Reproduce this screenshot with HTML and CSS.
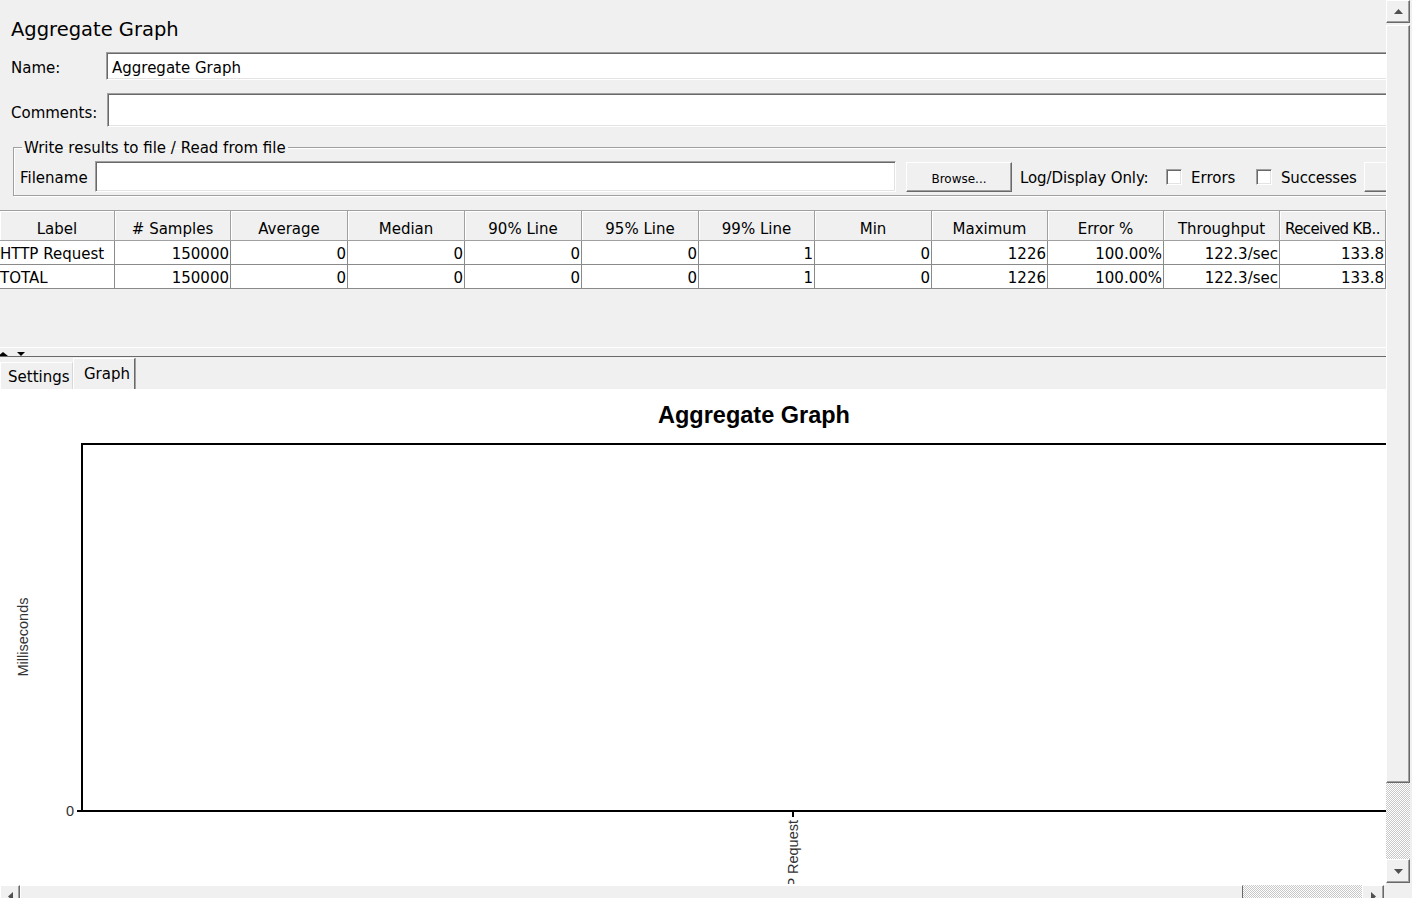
FILE: index.html
```html
<!DOCTYPE html>
<html>
<head>
<meta charset="utf-8">
<link rel="stylesheet" href="styles.css">
</head>
<body>
<div class="frame">
  <div class="main">
    <div class="title">Aggregate Graph</div>
    <div class="row name-row">
      <span class="lbl">Name:</span>
      <div class="field name-field">Aggregate Graph</div>
    </div>
    <div class="row comments-row">
      <span class="lbl">Comments:</span>
      <div class="field comments-field"></div>
    </div>
    <fieldset class="fileset">
      <legend>Write results to file / Read from file</legend>
      <div class="file-row">
        <span class="fname">Filename</span>
        <div class="field file-field"></div>
        <div class="btn browse">Browse...</div>
        <span class="logonly">Log/Display Only:</span>
        <span class="chk"></span><span class="chk-lbl errors">Errors</span>
        <span class="chk"></span><span class="chk-lbl succ">Successes</span>
        <div class="btn configure"></div>
      </div>
    </fieldset>
    <table class="grid">
      <colgroup>
        <col style="width:115px"><col style="width:116px"><col style="width:117px"><col style="width:117px">
        <col style="width:117px"><col style="width:117px"><col style="width:116px"><col style="width:117px">
        <col style="width:116px"><col style="width:116px"><col style="width:116px"><col style="width:106px">
      </colgroup>
      <thead>
        <tr>
          <th>Label</th><th># Samples</th><th>Average</th><th>Median</th><th>90% Line</th><th>95% Line</th>
          <th>99% Line</th><th>Min</th><th>Maximum</th><th>Error %</th><th>Throughput</th><th class="trunc">Received KB..</th>
        </tr>
      </thead>
      <tbody>
        <tr>
          <td class="l">HTTP Request</td><td>150000</td><td>0</td><td>0</td><td>0</td><td>0</td>
          <td>1</td><td>0</td><td>1226</td><td>100.00%</td><td>122.3/sec</td><td>133.8</td>
        </tr>
        <tr>
          <td class="l">TOTAL</td><td>150000</td><td>0</td><td>0</td><td>0</td><td>0</td>
          <td>1</td><td>0</td><td>1226</td><td>100.00%</td><td>122.3/sec</td><td>133.8</td>
        </tr>
      </tbody>
    </table>
    <div class="table-gap"></div>
    <div class="divider">
      <svg class="div-arrows" width="30" height="5" viewBox="0 0 30 5">
        <polygon points="-2,4 3,0 8,4" fill="#000"/>
        <polygon points="17,0 25,0 21,4" fill="#000"/>
      </svg>
    </div>
    <div class="tabs">
      <div class="tab">Settings</div>
      <div class="tab sel">Graph</div>
    </div>
    <div class="graph">
      <svg class="chart" width="1508" height="494" viewBox="0 0 1508 494">
        <text x="754" y="33" text-anchor="middle" class="ctitle">Aggregate Graph</text>
        <rect x="82" y="54" width="1424" height="367" fill="#fff" stroke="#000" stroke-width="2"/>
        <line x1="77" y1="421" x2="82" y2="421" stroke="#000" stroke-width="2"/>
        <text x="74" y="426" text-anchor="end" class="ctick">0</text>
        <line x1="793" y1="421" x2="793" y2="427" stroke="#000" stroke-width="2"/>
        <text transform="translate(798,430) rotate(-90)" text-anchor="end" class="ctick">HTTP Request</text>
        <text transform="translate(28,247) rotate(-90)" text-anchor="middle" class="ctick">Milliseconds</text>
      </svg>
    </div>
  </div>
  <div class="vscroll">
    <div class="sbtn up">
      <svg width="9" height="5" viewBox="0 0 9 5"><polygon points="0,5 4.5,0 9,5" fill="#505050"/></svg>
    </div>
    <div class="vthumb"></div>
    <div class="vtrack"></div>
    <div class="sbtn down">
      <svg width="9" height="5" viewBox="0 0 9 5"><polygon points="0,0 9,0 4.5,5" fill="#505050"/></svg>
    </div>
  </div>
  <div class="hscroll">
    <div class="hbtn left">
      <svg width="5" height="9" viewBox="0 0 5 9"><polygon points="5,0 5,9 0,4.5" fill="#505050"/></svg>
    </div>
    <div class="hthumb"></div>
    <div class="htrack"></div>
    <div class="hbtn right">
      <svg width="5" height="9" viewBox="0 0 5 9"><polygon points="0,0 5,4.5 0,9" fill="#505050"/></svg>
    </div>
  </div>
  <div class="corner"></div>
</div>
</body>
</html>
```
FILE: styles.css
```css
html, body {
  margin: 0;
  padding: 0;
  background: #f0f0f0;
  overflow: hidden;
}
body {
  font-family: "DejaVu Sans", "Liberation Sans", sans-serif;
  font-size: 15px;
  color: #000;
}
.frame {
  display: grid;
  grid-template-columns: 1386px 26px;
  grid-template-rows: 884px 14px;
  width: 1412px;
  height: 898px;
}
.main {
  overflow: hidden;
  background: #f0f0f0;
  display: flex;
  flex-direction: column;
  min-width: 0;
}
.title {
  font-size: 19.5px;
  line-height: 28px;
  padding: 16px 0 0 11px;
  height: 28px;
  flex: none;
}
.row {
  display: flex;
  align-items: center;
  width: 1410px;
  flex: none;
}
.name-row {
  margin-top: 8px;
  height: 28px;
}
.comments-row {
  margin-top: 13px;
  height: 34px;
}
.lbl {
  padding-left: 11px;
  flex: none;
}
.name-row .lbl { width: 95px; padding-top: 3px; }
.comments-row .lbl { width: 96px; padding-top: 5px; }
.field {
  background: #fff;
  border-top: 1px solid #a0a0a0;
  border-left: 1px solid #a0a0a0;
  border-right: 1px solid #fff;
  border-bottom: 1px solid #fff;
  box-shadow: inset 1px 1px 0 #696969, inset -1px -1px 0 #e3e3e3;
  box-sizing: border-box;
}
.name-field {
  flex: 1;
  height: 28px;
  line-height: 26px;
  padding: 2px 0 0 5px;
}
.comments-field {
  flex: 1;
  height: 34px;
}
.fileset {
  margin: 11px 0 0 13px;
  padding: 0 6px 3px 6px;
  border: 1px solid #a0a0a0;
  box-shadow: inset 1px 1px 0 #fff, 1px 1px 0 #fff;
  width: 1400px;
  box-sizing: border-box;
  flex: none;
  min-width: 0;
}
.fileset legend {
  padding: 1px 2px 0 2px;
  margin-left: 2px;
  line-height: 18px;
  font-size: 15px;
}
.file-row {
  display: flex;
  align-items: center;
  height: 31px;
  margin-top: 4px;
}
.fname {
  width: 75px;
  flex: none;
  padding-top: 2px;
}
.file-field {
  width: 801px;
  height: 31px;
  flex: none;
}
.btn {
  background: #f0f0f0;
  border-top: 1px solid #fff;
  border-left: 1px solid #fff;
  border-right: 1px solid #696969;
  border-bottom: 1px solid #696969;
  box-shadow: inset -1px -1px 0 #a0a0a0;
  box-sizing: border-box;
  flex: none;
}
.browse {
  margin-left: 10px;
  width: 106px;
  height: 30px;
  font-size: 12px;
  text-align: center;
  line-height: 30px;
  padding-top: 1px;
}
.logonly {
  margin-left: 8px;
  width: 146px;
  flex: none;
  white-space: nowrap;
  padding-top: 2px;
  letter-spacing: -0.1px;
}
.chk {
  width: 16px;
  height: 16px;
  box-sizing: border-box;
  background: #fff;
  border-top: 1px solid #a0a0a0;
  border-left: 1px solid #a0a0a0;
  border-right: 1px solid #fff;
  border-bottom: 1px solid #fff;
  box-shadow: inset 1px 1px 0 #696969, inset -1px -1px 0 #e3e3e3;
  flex: none;
}
.chk-lbl {
  padding-left: 9px;
  padding-top: 2px;
  flex: none;
  white-space: nowrap;
}
.errors { width: 65px; }
.succ { width: 83px; letter-spacing: -0.2px; }
.configure {
  width: 60px;
  height: 30px;
  margin-left: 0;
}
.grid {
  margin-top: 14px;
  border-collapse: separate;
  border-spacing: 0;
  table-layout: fixed;
  width: 1386px;
  flex: none;
  font-size: 15px;
}
.grid th {
  font-weight: normal;
  height: 31px;
  padding: 9px 0 0 0;
  box-sizing: border-box;
  background: #f0f0f0;
  border-top: 1px solid #a0a0a0;
  border-right: 1px solid #a0a0a0;
  border-bottom: 1px solid #a0a0a0;
  box-shadow: inset 1px 1px 0 #fff;
  text-align: center;
  vertical-align: top;
  line-height: 18px;
  white-space: nowrap;
  overflow: hidden;
}
.grid th.trunc {
  text-align: left;
  padding-left: 5px;
  letter-spacing: -0.6px;
}
.grid td {
  background: #fff;
  height: 24px;
  box-sizing: border-box;
  padding: 4px 1px 0 0;
  border-right: 1px solid #8a8a8a;
  border-bottom: 1px solid #8a8a8a;
  text-align: right;
  vertical-align: top;
  line-height: 18px;
  white-space: nowrap;
  overflow: hidden;
}
.grid td.l {
  text-align: left;
  padding: 4px 0 0 0;
}
.table-gap {
  height: 58px;
  flex: none;
}
.divider {
  height: 10px;
  box-sizing: border-box;
  border-top: 1px solid #fff;
  border-bottom: 1px solid #696969;
  flex: none;
}
.div-arrows {
  display: block;
  margin-top: 4px;
}
.tabs {
  display: flex;
  align-items: flex-end;
  height: 33px;
  box-sizing: border-box;
  border-bottom: 1px solid #fff;
  flex: none;
}
.tab {
  height: 27px;
  line-height: 26px;
  padding: 1px 5px 0 7px;
  border-top: 1px solid #fff;
  border-left: 1px solid #fff;
  border-right: 1px solid #d8d8d8;
  box-sizing: border-box;
  width: 73px;
}
.tab.sel {
  height: 31px;
  line-height: 26px;
  width: 62px;
  padding: 2px 0 3px 10px;
  border-right: 1px solid #696969;
  box-shadow: 1px 0 0 #a0a0a0;
}
.graph {
  flex: 1;
  background: #fff;
  overflow: hidden;
  min-height: 0;
}
.chart {
  display: block;
}
.ctitle {
  font-family: "Liberation Sans", Arial, sans-serif;
  font-weight: bold;
  font-size: 23.5px;
}
.ctick {
  font-family: "Liberation Sans", Arial, sans-serif;
  font-size: 14.5px;
  fill: #333;
}
.vscroll {
  grid-row: 1 / 2;
  grid-column: 2 / 3;
  display: flex;
  flex-direction: column;
  padding-right: 2px;
  background: #f0f0f0;
}
.sbtn {
  height: 23px;
  box-sizing: border-box;
  background: #f0f0f0;
  border-top: 1px solid #fff;
  border-left: 1px solid #fff;
  border-right: 1px solid #696969;
  border-bottom: 1px solid #696969;
  box-shadow: inset -1px -1px 0 #a0a0a0;
  display: flex;
  align-items: center;
  justify-content: center;
  flex: none;
}
.sbtn.down {
  height: 24px;
  margin-bottom: 1px;
}
.vthumb {
  margin-top: 2px;
  height: 758px;
  box-sizing: border-box;
  background: #f0f0f0;
  border-top: 1px solid #fff;
  border-left: 1px solid #fff;
  border-right: 1px solid #696969;
  border-bottom: 1px solid #696969;
  box-shadow: inset -1px -1px 0 #a0a0a0;
  flex: none;
}
.vtrack {
  flex: 1;
  background: repeating-conic-gradient(#fff 0 25%, #c8c8c8 0 50%) 0 0 / 2px 2px;
}
.hscroll {
  grid-row: 2 / 3;
  grid-column: 1 / 2;
  display: flex;
  height: 14px;
  overflow: hidden;
  border-top: 1px solid #fff;
  box-sizing: border-box;
}
.hbtn {
  height: 22px;
  box-sizing: border-box;
  background: #f0f0f0;
  border-top: 1px solid #fff;
  border-left: 1px solid #fff;
  border-right: 1px solid #696969;
  border-bottom: 1px solid #696969;
  box-shadow: inset -1px -1px 0 #a0a0a0;
  display: flex;
  align-items: flex-start;
  justify-content: center;
  padding-top: 6px;
  flex: none;
}
.hbtn.left { width: 20px; }
.hbtn.right { width: 22px; margin-right: 2px; }
.hthumb {
  width: 1223px;
  height: 22px;
  box-sizing: border-box;
  background: #f0f0f0;
  border-top: 1px solid #fff;
  border-left: 1px solid #fff;
  border-right: 1px solid #696969;
  border-bottom: 1px solid #696969;
  flex: none;
}
.htrack {
  flex: 1;
  background: repeating-conic-gradient(#fff 0 25%, #c8c8c8 0 50%) 0 0 / 2px 2px;
}
.corner {
  grid-row: 2 / 3;
  grid-column: 2 / 3;
  background: #f0f0f0;
}
```
